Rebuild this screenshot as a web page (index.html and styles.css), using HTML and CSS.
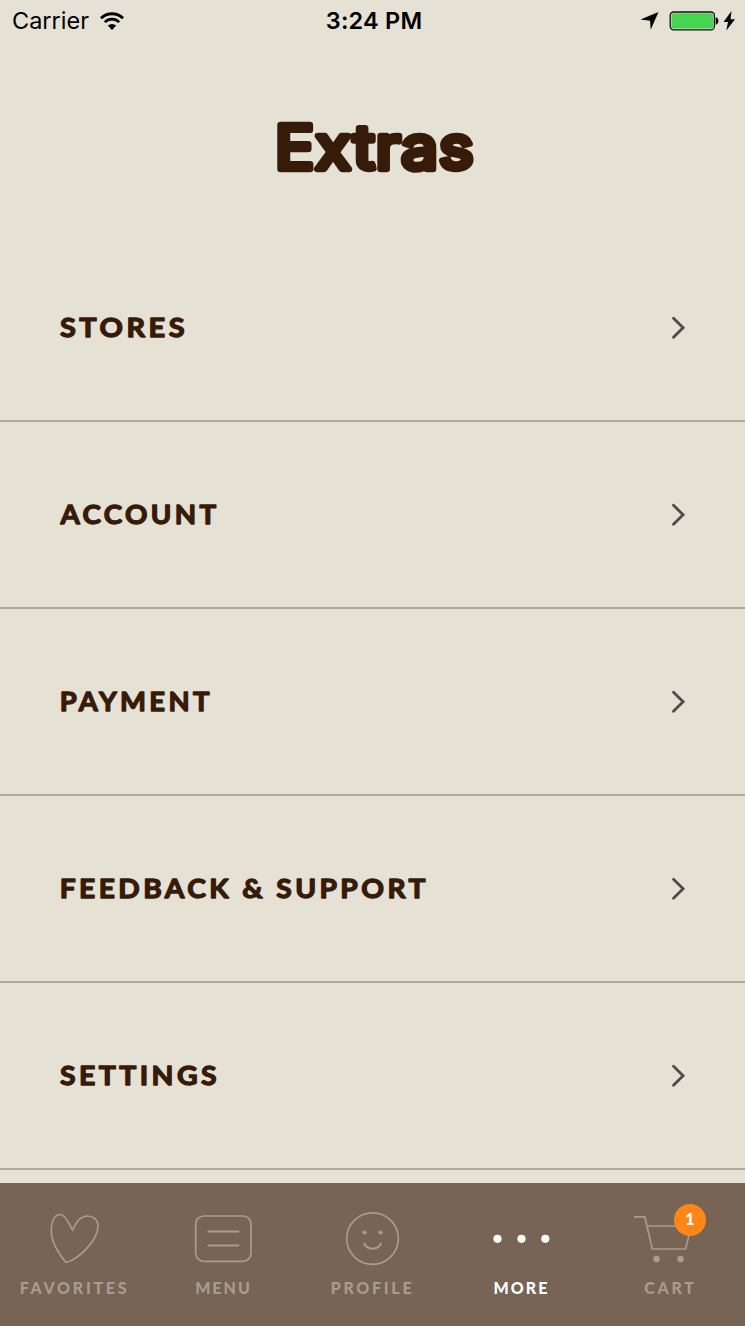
FILE: index.html
```html
<!DOCTYPE html>
<html lang="en">
<head>
    <meta charset="UTF-8">
    <meta name="viewport" content="width=device-width, initial-scale=1.0">
    <title>Extras</title>
    <link rel="stylesheet" href="styles.css">
</head>
<body>
    <div class="screen">
        <header class="status-bar">
            <div class="status-left">
                <span class="carrier">Carrier</span>
                <svg class="wifi" width="26" height="20" viewBox="0 0 26 20">
                    <path d="M2 7.2a15.6 15.6 0 0 1 22 0" fill="none" stroke="#000" stroke-width="3"/>
                    <path d="M5.8 11.1a10.2 10.2 0 0 1 14.4 0" fill="none" stroke="#000" stroke-width="2.7"/>
                    <path d="M8.8 14.6a6 6 0 0 1 8.4 0L13 18.9z"/>
                </svg>
            </div>
            <span class="time">3:24 PM</span>
            <div class="status-right">
                <svg width="20" height="20" viewBox="0 0 20 20">
                    <path d="M18.500 1L10.700 18.700 10.100 9.800 0.500 8.400z"/>
                </svg>
                <svg class="battery" width="50" height="20" viewBox="0 0 50 20">
                    <rect x="0.2" y="1" width="44.2" height="17.8" rx="3.5" fill="none" stroke="#111" stroke-width="1.3"/>
                    <rect x="1.5" y="2.3" width="41.6" height="15.2" rx="2" fill="#44d551"/>
                    <path d="M45.700 6.3c3.6.6 3.6 6.8 0 7.4z"/>
                </svg>
                <svg class="bolt" width="12" height="20" viewBox="0 0 12 20">
                    <path d="M7.500 0L-0.500 11h4.500L2.300 19.500 11 8.300H6.500z"/>
                </svg>
            </div>
        </header>

        <h1 class="title">
            <svg width="240" height="90" viewBox="0 0 240 90">
                <text class="title-text" x="20" y="64" textLength="199.5" lengthAdjust="spacingAndGlyphs">Extras</text>
            </svg>
        </h1>

        <ul class="list">
            <li class="row">
                <svg class="row-label" width="400" height="40" viewBox="0 0 400 40"><text x="0" y="29" textLength="128" lengthAdjust="spacingAndGlyphs">STORES</text></svg>
                <svg class="chevron" width="16" height="24" viewBox="0 0 16 24"><path d="M2.5 2.3l9.6 9.5-9.6 9.5"/></svg>
            </li>
            <li class="row">
                <svg class="row-label" width="400" height="40" viewBox="0 0 400 40"><text x="0.5" y="29" textLength="159" lengthAdjust="spacingAndGlyphs">ACCOUNT</text></svg>
                <svg class="chevron" width="16" height="24" viewBox="0 0 16 24"><path d="M2.5 2.3l9.6 9.5-9.6 9.5"/></svg>
            </li>
            <li class="row">
                <svg class="row-label" width="400" height="40" viewBox="0 0 400 40"><text x="-0.3" y="29" textLength="153" lengthAdjust="spacingAndGlyphs">PAYMENT</text></svg>
                <svg class="chevron" width="16" height="24" viewBox="0 0 16 24"><path d="M2.5 2.3l9.6 9.5-9.6 9.5"/></svg>
            </li>
            <li class="row">
                <svg class="row-label" width="400" height="40" viewBox="0 0 400 40"><text x="-0.3" y="29" textLength="369" lengthAdjust="spacingAndGlyphs">FEEDBACK &amp; SUPPORT</text></svg>
                <svg class="chevron" width="16" height="24" viewBox="0 0 16 24"><path d="M2.5 2.3l9.6 9.5-9.6 9.5"/></svg>
            </li>
            <li class="row">
                <svg class="row-label" width="400" height="40" viewBox="0 0 400 40"><text x="0" y="29" textLength="160" lengthAdjust="spacingAndGlyphs">SETTINGS</text></svg>
                <svg class="chevron" width="16" height="24" viewBox="0 0 16 24"><path d="M2.5 2.3l9.6 9.5-9.6 9.5"/></svg>
            </li>
        </ul>

        <nav class="tab-bar">
            <a class="tab favorites">
                <svg class="tab-icon" width="60" height="60" viewBox="-0.5 0 60 60">
                    <path d="M28 21C25 16 21 5.5 16 5.5 9.5 5.5 6.8 13 6.8 22 6.8 34 14.5 45 21.5 53.5 35 50 53.5 31 53.5 17 53.5 10.5 48.5 7 43 7 36.5 7 31.5 13 28 21z"/>
                </svg>
                <span class="tab-label">FAVORITES</span>
            </a>
            <a class="tab menu">
                <svg class="tab-icon" width="60" height="60" viewBox="-0.5 0 60 60">
                    <rect x="2.2" y="7" width="55.3" height="45.3" rx="8"/>
                    <path d="M15 22.5h30M15 36.5h30" stroke-width="2" stroke-linecap="round"/>
                </svg>
                <span class="tab-label">MENU</span>
            </a>
            <a class="tab profile">
                <svg class="tab-icon" width="60" height="60" viewBox="-0.5 0 60 60">
                    <circle cx="30" cy="29.6" r="25.8"/>
                    <circle class="dot" cx="22" cy="23.5" r="2.1"/>
                    <circle class="dot" cx="38" cy="23.5" r="2.1"/>
                    <path d="M21.3 34c3.2 7.5 14.2 7.5 17.4 0" stroke-width="2"/>
                </svg>
                <span class="tab-label">PROFILE</span>
            </a>
            <a class="tab more active">
                <svg class="tab-icon" width="60" height="60" viewBox="-0.5 0 60 60">
                    <circle class="dot" cx="6" cy="29.8" r="4.1"/>
                    <circle class="dot" cx="30" cy="29.8" r="4.1"/>
                    <circle class="dot" cx="53.8" cy="29.8" r="4.1"/>
                </svg>
                <span class="tab-label">MORE</span>
            </a>
            <a class="tab cart">
                <svg class="tab-icon" width="60" height="60" viewBox="-0.5 0 60 60">
                    <path d="M-6.5 7.8H4.3L11.8 40H45l6-23H6.5"/>
                    <circle class="dot" cx="16" cy="50" r="3.3"/>
                    <circle class="dot" cx="40" cy="50" r="3.3"/>
                </svg>
                <span class="badge">1</span>
                <span class="tab-label">CART</span>
            </a>
        </nav>
    </div>
</body>
</html>
```

FILE: styles.css
```css
* {
    box-sizing: border-box;
}
body {
    margin: 0;
    background-color: #e5e1d5;
    font-family: Lato, "Liberation Sans", sans-serif;
}
.screen {
    display: flex;
    flex-direction: column;
    width: 745px;
    height: 1326px;
    overflow: hidden;
}
.status-bar {
    display: grid;
    grid-template-columns: 1fr auto 1fr;
    align-items: center;
    flex: none;
    height: 41px;
    padding: 0 9px 0 12px;
    color: #000;
    font-family: Inter, sans-serif;
    font-size: 23.5px;
}
.status-left, .status-right {
    display: flex;
    align-items: center;
}
.status-right {
    justify-content: flex-end;
}
.status-right svg {
    overflow: visible;
}
.wifi {
    margin-left: 10px;
}
.time {
    font-weight: 600;
    letter-spacing: 0.2px;
}
.battery {
    margin-left: 10px;
}
.bolt {
    margin-left: 4px;
}
.title {
    flex: none;
    height: 194px;
    margin: 0;
    padding: 64px 0 0 255px;
}
.title svg {
    display: block;
    overflow: visible;
}
.title-text {
    font-family: Inter, sans-serif;
    font-size: 60px;
    font-weight: 400;
    letter-spacing: 1px;
    fill: #371b09;
    stroke: #371b09;
    stroke-width: 6.4px;
    stroke-linejoin: round;
}
.list {
    flex: 1;
    min-height: 0;
    margin: 0;
    padding: 0;
    list-style: none;
}
.row {
    display: flex;
    align-items: center;
    justify-content: space-between;
    height: 187px;
    padding: 0 58px 0 60px;
    border-bottom: 2px solid #aeaaa0;
}
.row-label {
    overflow: visible;
    font-size: 26.5px;
    font-weight: 700;
    letter-spacing: 3.2px;
    fill: #371b09;
    stroke: #371b09;
    stroke-width: 1.3px;
    stroke-linejoin: round;
}
.chevron {
    fill: none;
    stroke: #504c45;
    stroke-width: 2.8px;
    stroke-linecap: round;
}
.tab-bar {
    display: grid;
    grid-template-columns: repeat(5, 149px);
    flex: none;
    height: 143px;
    background-color: #776454;
}
.tab {
    position: relative;
    display: flex;
    flex-direction: column;
    align-items: center;
    padding: 26px 1px 0 0;
    color: #a89b8f;
}
.tab-icon {
    overflow: visible;
    fill: none;
    stroke: currentColor;
    stroke-width: 1.7px;
}
.tab-icon .dot {
    fill: currentColor;
    stroke: none;
}
.tab-label {
    margin-top: 9px;
    padding-left: 1px;
    font-size: 16px;
    font-weight: 900;
    line-height: 20px;
    letter-spacing: 2.7px;
}
.menu .tab-label, .more .tab-label {
    letter-spacing: 2px;
}
.active {
    color: #fff;
}
.badge {
    position: absolute;
    top: 21px;
    left: 78px;
    width: 32px;
    height: 32px;
    border-radius: 50%;
    background-color: #ff8717;
    color: #fff;
    font-size: 16px;
    font-weight: 900;
    line-height: 30px;
    text-align: center;
}
```
